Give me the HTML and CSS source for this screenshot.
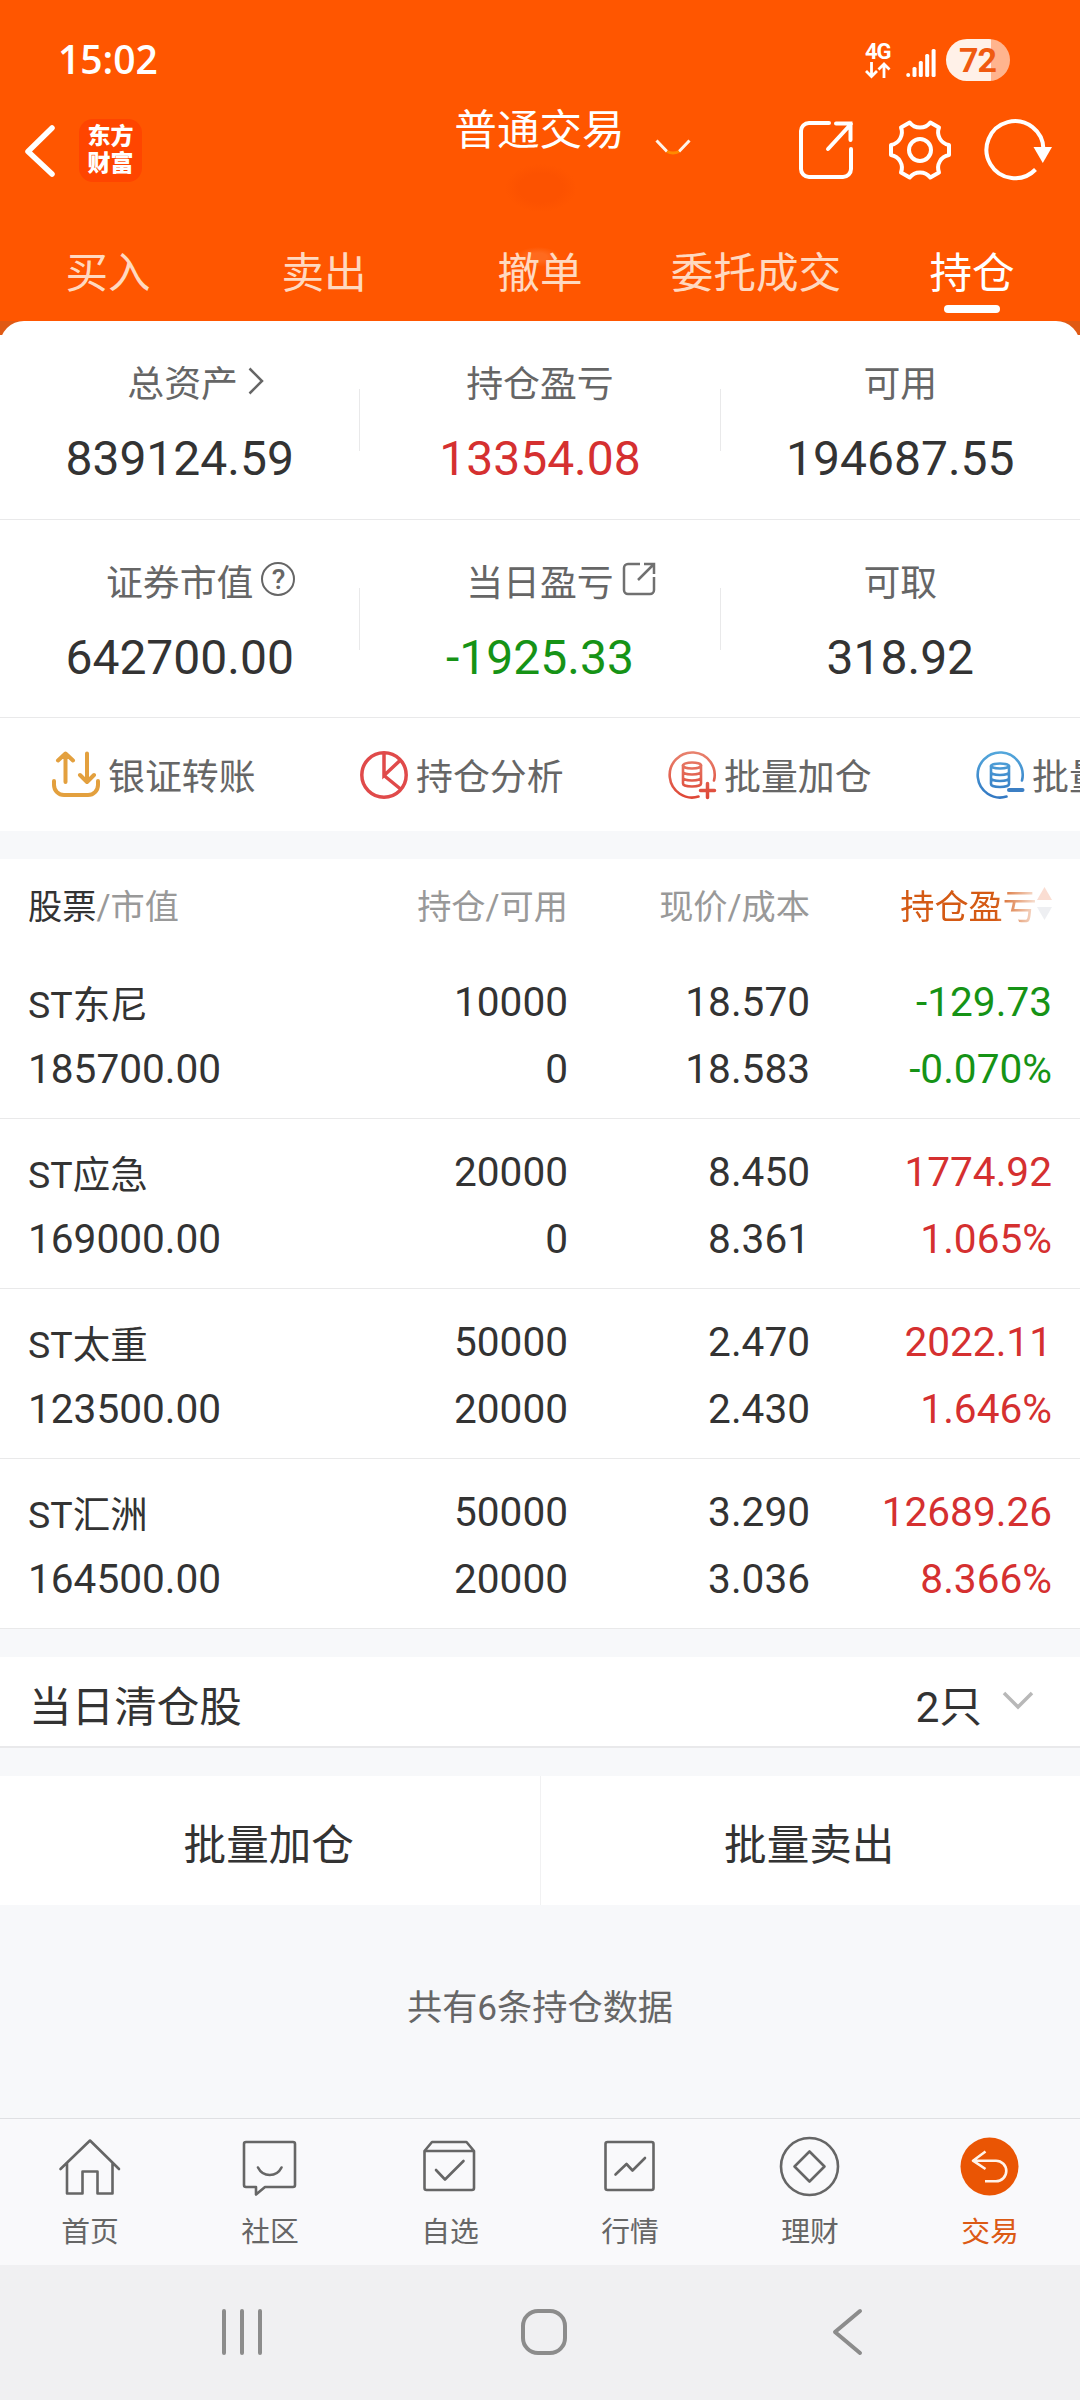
FILE: index.html
```html
<!DOCTYPE html>
<html lang="zh-CN">
<head>
  <meta charset="UTF-8">
  <meta name="viewport" content="width=device-width, initial-scale=1.0">
  <title>普通交易 - 持仓</title>
  <link rel="stylesheet" href="styles.css">
</head>
<body>

  <header class="header">
    <div class="status">
      <span class="clock">15:02</span>
      <div class="status-right">
        <div class="network">
          <span>4G</span>
          <svg width="26" height="16" viewBox="0 0 26 16" fill="none" stroke="#fff" stroke-width="2.8"><path d="M6.500 0v14M1 9l5.500 5.500L12 9M19 16V2M13.500 7.500L19 2l5.500 5.500"/></svg>
        </div>
        <svg class="signal" width="30" height="28" viewBox="0 0 30 28" fill="#fff">
          <circle cx="2.200" cy="26" r="2"/>
          <rect x="6.500" y="18" width="4" height="10" rx="1.500"/>
          <rect x="12.800" y="12" width="4" height="16" rx="1.500"/>
          <rect x="19.200" y="5" width="4" height="23" rx="1.500"/>
          <rect x="25.600" y="0" width="4" height="28" rx="1.500"/>
        </svg>
        <span class="battery">72</span>
      </div>
    </div>

    <div class="nav">
      <div class="nav-left">
        <svg width="32" height="54" viewBox="0 0 32 54" fill="none" stroke="#fff" stroke-width="5.500" stroke-linecap="round" stroke-linejoin="round"><path d="M28 4L4 27.500 28 50"/></svg>
        <div class="logo">东方<br>财富</div>
      </div>
      <div class="nav-title">
        <h1>普通交易</h1>
        <svg width="36" height="16" viewBox="0 0 36 16" fill="none" stroke="#fff3e8" stroke-width="3"><path d="M1.500 1.500L12 12.500M24 12.500L34.500 1.500"/><path d="M12 12.500q6 3 12 0" stroke="#ff8a00"/></svg>
      </div>
      <div class="nav-right">
        <svg width="64" height="64" viewBox="0 0 64 64" fill="none" stroke="#fff" stroke-width="4"><path d="M35 5H15a8 8 0 0 0-8 8v38a8 8 0 0 0 8 8h34a8 8 0 0 0 8-8V31" stroke-linecap="round"/><path d="M34 31L57 6M42 5.500h14.500V22" stroke-linecap="round"/></svg>
        <svg width="64" height="64" viewBox="0 0 64 64" fill="none" stroke="#fff" stroke-width="4" stroke-linejoin="round"><path d="M61 27v10a13 13 0 0 0-10 17.500L42.300 59.500a13 13 0 0 0-20.600 0L13 54.500A13 13 0 0 0 3 37V27A13 13 0 0 0 13 9.500L21.700 4.500a13 13 0 0 0 20.600 0L51 9.500A13 13 0 0 0 61 27z"/><circle cx="32" cy="32" r="11"/></svg>
        <svg class="refresh" width="64" height="64" viewBox="0 0 64 64" fill="none" stroke="#fff" stroke-width="4"><path d="M61.500 32A28.500 28.500 0 1 0 53.500 51.500"/><path d="M51.500 29h18.500l-9.200 16z" fill="#fff" stroke="none"/></svg>
      </div>
    </div>

    <nav class="tabs">
      <a>买入</a>
      <a>卖出</a>
      <a class="smudge">撤单</a>
      <a>委托成交</a>
      <a class="active">持仓</a>
    </nav>
  </header>

  <main>
    <section class="assets">
      <div class="asset-row">
        <div class="asset">
          <div class="label first">总资产<svg class="chevron" width="16" height="28" viewBox="0 0 16 28" fill="none" stroke="#666" stroke-width="2.500"><path d="M1.500 1.500L14 14 1.500 26.500"/></svg></div>
          <div class="value">839124.59</div>
        </div>
        <div class="asset">
          <div class="label">持仓盈亏</div>
          <div class="value up">13354.08</div>
        </div>
        <div class="asset">
          <div class="label">可用</div>
          <div class="value">194687.55</div>
        </div>
      </div>
      <div class="asset-row">
        <div class="asset">
          <div class="label">证券市值<span class="help">?</span></div>
          <div class="value">642700.00</div>
        </div>
        <div class="asset">
          <div class="label">当日盈亏<svg class="share" width="34" height="34" viewBox="0 0 34 34" fill="none" stroke="#707070" stroke-width="2.500"><path d="M18 2H6a4 4 0 0 0-4 4v22a4 4 0 0 0 4 4h22a4 4 0 0 0 4-4V15M16 18L31 3M22 2h10v10"/></svg></div>
          <div class="value down">-1925.33</div>
        </div>
        <div class="asset">
          <div class="label">可取</div>
          <div class="value">318.92</div>
        </div>
      </div>
    </section>

    <section class="actions">
      <a>
        <svg width="48" height="48" viewBox="0 0 48 48" fill="none" stroke="#e3a03e" stroke-width="4" stroke-linecap="round" stroke-linejoin="round"><path d="M13.500 31V3M6 9.500L13.500 2.500 21 9.500M35 2.500v28M28 24l7 7 7-7M2 30v4a10 10 0 0 0 10 10h24a10 10 0 0 0 10-10v-4"/></svg>
        <span>银证转账</span>
      </a>
      <a>
        <svg width="48" height="48" viewBox="0 0 48 48" fill="none" stroke="#e04a4a" stroke-width="3.500"><circle cx="24" cy="24" r="22.200"/><path d="M24 2v22.500L40.500 9M24 24.500L40.500 38"/></svg>
        <span>持仓分析</span>
      </a>
      <a>
        <svg width="48" height="48" viewBox="0 0 48 48" fill="none" stroke="url(#red)" stroke-width="2.600" stroke-linecap="round">
          <defs><linearGradient id="red" gradientUnits="userSpaceOnUse" x1="0" y1="0" x2="0" y2="48"><stop offset="0" stop-color="#e8836f"/><stop offset="1" stop-color="#de4535"/></linearGradient></defs>
          <path d="M46 29.500A22.500 22.500 0 1 0 30.500 45.600"/>
          <ellipse cx="24" cy="14.500" rx="9" ry="3"/>
          <path d="M15 14.500v18c0 4 18 4 18 0v-18M15 20.500c0 4 18 4 18 0M15 26.500c0 4 18 4 18 0"/>
          <path d="M32.500 39.500h14M39.500 32.500v14" stroke-width="3.500"/>
        </svg>
        <span>批量加仓</span>
      </a>
      <a>
        <svg width="48" height="48" viewBox="0 0 48 48" fill="none" stroke="url(#blue)" stroke-width="2.600" stroke-linecap="round">
          <defs><linearGradient id="blue" gradientUnits="userSpaceOnUse" x1="0" y1="0" x2="0" y2="48"><stop offset="0" stop-color="#54a8dc"/><stop offset="1" stop-color="#3277c2"/></linearGradient></defs>
          <path d="M46 29.500A22.500 22.500 0 1 0 30.500 45.600"/>
          <ellipse cx="24" cy="15" rx="9" ry="2.500"/>
          <path d="M15 15v18c0 4 18 4 18 0v-18M15 21c0 4 18 4 18 0M15 27c0 4 18 4 18 0"/>
          <path d="M33 39h13.500" stroke="#3c7fc4" stroke-width="4"/>
        </svg>
        <span>批量</span>
      </a>
    </section>

    <section class="holdings">
      <div class="holdings-head">
        <span><b>股票</b>/市值</span>
        <span>持仓/可用</span>
        <span>现价/成本</span>
        <span class="sort">持仓盈亏<svg width="15" height="34" viewBox="0 0 15 34"><path d="M7.500 0L15 13H0z" fill="#e8541e"/><path d="M0 20h15l-7.500 13z" fill="#aab0c0"/></svg></span>
      </div>
      <div class="stock">
        <div><span class="name">ST东尼</span><span>185700.00</span></div>
        <div><span>10000</span><span>0</span></div>
        <div><span>18.570</span><span>18.583</span></div>
        <div class="down"><span>-129.73</span><span>-0.070%</span></div>
      </div>
      <div class="stock">
        <div><span class="name">ST应急</span><span>169000.00</span></div>
        <div><span>20000</span><span>0</span></div>
        <div><span>8.450</span><span>8.361</span></div>
        <div class="up"><span>1774.92</span><span>1.065%</span></div>
      </div>
      <div class="stock">
        <div><span class="name">ST太重</span><span>123500.00</span></div>
        <div><span>50000</span><span>20000</span></div>
        <div><span>2.470</span><span>2.430</span></div>
        <div class="up"><span>2022.11</span><span>1.646%</span></div>
      </div>
      <div class="stock">
        <div><span class="name">ST汇洲</span><span>164500.00</span></div>
        <div><span>50000</span><span>20000</span></div>
        <div><span>3.290</span><span>3.036</span></div>
        <div class="up"><span>12689.26</span><span>8.366%</span></div>
      </div>
    </section>

    <section class="cleared">
      <span>当日清仓股</span>
      <span class="count">2只<svg width="32" height="20" viewBox="0 0 32 20" fill="none" stroke="#b8b8b8" stroke-width="3.500"><path d="M2 2l14 14L30 2"/></svg></span>
    </section>

    <section class="batch">
      <button>批量加仓</button>
      <button>批量卖出</button>
    </section>

    <p class="total">共有6条持仓数据</p>
  </main>

  <footer class="tabbar">
    <a>
      <svg width="64" height="64" viewBox="0 0 64 64"><path d="M2.500 35L32 6.500 61 35M9 29v30.500h15.500V37.500h15v22h15V29"/></svg>
      首页
    </a>
    <a>
      <svg width="64" height="64" viewBox="0 0 64 64"><path d="M8 8h47a2 2 0 0 1 2 2v41a2 2 0 0 1-2 2H27l-9 7.500V53H8a2 2 0 0 1-2-2V10a2 2 0 0 1 2-2zM20 33.500c5 10 18.500 10 23.500 0"/></svg>
      社区
    </a>
    <a>
      <svg width="64" height="64" viewBox="0 0 64 64"><path d="M6.500 17L14 8h34.500l7.500 9v37a2 2 0 0 1-2 2H8.500a2 2 0 0 1-2-2zh49.500M18 36l9 9.500L45.500 27"/></svg>
      自选
    </a>
    <a>
      <svg width="64" height="64" viewBox="0 0 64 64"><rect x="7.500" y="8" width="48" height="48" rx="2"/><path d="M17.500 40.500L28.500 30l6 6.500L47 24"/></svg>
      行情
    </a>
    <a>
      <svg width="64" height="64" viewBox="0 0 64 64"><circle cx="31.500" cy="32.500" r="28.500"/><path d="M31.500 17.500L46.500 32.500 31.500 47.500 16.500 32.500z"/></svg>
      理财
    </a>
    <a class="current">
      <svg width="64" height="64" viewBox="0 0 64 64"><circle cx="31.500" cy="32.500" r="29" fill="#ea5504" stroke="none"/><path d="M15.500 26.700h22.500a10.300 10.300 0 0 1 0 20.600H27M27.500 17.500L15 26.700 27.500 35" stroke="#fff3ea" stroke-linecap="butt"/></svg>
      交易
    </a>
  </footer>

  <div class="system-nav">
    <svg width="42" height="44" viewBox="0 0 42 44"><path d="M3 1v42M21 1v42M39 1v42"/></svg>
    <svg class="home" width="48" height="48" viewBox="0 0 48 48"><rect x="3" y="3" width="42" height="42" rx="15"/></svg>
    <svg width="32" height="48" viewBox="0 0 32 48"><path d="M29 3L4 24l25 21"/></svg>
  </div>

</body>
</html>
```
FILE: styles.css
```css
* {
  box-sizing: border-box;
}

body {
  margin: 0;
  width: 1080px;
  height: 2400px;
  overflow: hidden;
  display: flex;
  flex-direction: column;
  background-color: #f7f8fa;
  color: #333;
  font-family: Roboto, "Noto Sans CJK SC", sans-serif;
}

svg {
  display: block;
  flex: none;
  overflow: visible;
}

.up {
  color: #d53030;
}

.down {
  color: #169316;
}

/* header */
.header {
  height: 321px;
  flex: none;
  background-color: #ff5600;
  color: #fff;
}

.status {
  height: 119px;
  padding: 0 70px 0 58px;
  display: flex;
  justify-content: space-between;
  align-items: center;
}

.clock {
  margin-top: -2px;
  font: 600 39px/44px "Open Sans", sans-serif;
}

.status-right {
  display: flex;
  align-items: center;
}

.network {
  width: 26px;
  margin-right: 15px;
  font-size: 22px;
  line-height: 20px;
  font-weight: 700;
  letter-spacing: -1px;
}

.signal {
  margin: 6px 10px 0 0;
}

.battery {
  width: 64px;
  height: 42px;
  padding-right: 1px;
  border-radius: 21px;
  background: linear-gradient(to right, #fff1e8 45px, #ffb48e 45px);
  color: #f05a10;
  font-size: 34px;
  font-weight: 700;
  line-height: 43px;
  text-align: center;
  letter-spacing: -1px;
}

.nav {
  height: 110px;
  padding: 0 34px 0 24px;
  display: grid;
  grid-template-columns: 300px 1fr 300px;
}

.nav-left {
  height: 63px;
  display: flex;
  align-items: center;
  gap: 23px;
}

.logo {
  width: 63px;
  height: 63px;
  padding-top: 4px;
  border-radius: 14px;
  background-color: #ff4500;
  font-size: 23px;
  line-height: 27px;
  font-weight: 900;
  text-align: center;
}

.nav-title {
  display: flex;
  justify-content: center;
  background: radial-gradient(ellipse 36px 24px at 217px 69px, #fc5200 60%, transparent);
}

.nav-title h1 {
  margin: -12px 0 0 7px;
  font-size: 42.600px;
  line-height: 46px;
  font-weight: 400;
}

.nav-title svg {
  margin: 20px -68px 0 30px;
}

.nav-right {
  display: flex;
  justify-content: flex-end;
  gap: 30px;
  margin-top: -1px;
}

.tabs {
  display: flex;
}

.tabs a {
  flex: 1;
  height: 84px;
  display: flex;
  flex-direction: column;
  align-items: center;
  gap: 8px;
  padding-top: 20px;
  color: #ffd9c0;
  font-size: 42.600px;
  line-height: 48px;
}

.tabs .smudge {
  background: radial-gradient(ellipse 22px 10px at 106px 28px, #ff6a1e 40%, transparent);
}

.tabs .active {
  color: #fff;
}

.tabs .active::after {
  content: "";
  width: 56px;
  height: 8px;
  border-radius: 4px;
  background-color: #fff;
}

/* assets */
.assets {
  background: linear-gradient(#e05a14 14px, #fff 14px);
}

.asset-row {
  height: 199px;
  display: flex;
  align-items: center;
  background-color: #fff;
  border-bottom: 1px solid #e9e9ea;
}

.asset-row:first-child {
  border-radius: 24px 24px 0 0;
}

.asset-row + .asset-row {
  height: 198px;
}

.asset {
  flex: 1;
  height: 62px;
  display: flex;
  flex-direction: column;
  align-items: center;
  justify-content: center;
  gap: 26px;
  padding-top: 8px;
  border-right: 1px solid #e9e9ea;
}

.asset:last-child {
  border-right: none;
}

.label {
  display: flex;
  align-items: center;
  height: 44px;
  flex: none;
  color: #666;
  font-size: 36.900px;
  line-height: 44px;
}

.label.first {
  padding-left: 6px;
}

.chevron {
  margin: -8px -26px 0 10px;
}

.share {
  margin: -9px -42px 0 8px;
}

.help {
  width: 34px;
  height: 34px;
  margin: -9px -42px 0 8px;
  border: 2.500px solid #666;
  border-radius: 50%;
  font-size: 28px;
  font-weight: 500;
  line-height: 31px;
  text-align: center;
}

.value {
  height: 52px;
  flex: none;
  font-size: 48px;
  line-height: 52px;
}

/* quick actions */
.actions {
  height: 113px;
  padding: 0 0 0 52px;
  display: flex;
  overflow: hidden;
  background-color: #fff;
}

.actions a {
  flex: 0 0 308px;
  display: flex;
  align-items: center;
  gap: 8px;
  color: #666;
  font-size: 36.900px;
  line-height: 48px;
  white-space: nowrap;
}

.actions span {
  padding-top: 6px;
}

/* holdings */
.holdings {
  margin-top: 28px;
  background-color: #fff;
}

.holdings-head,
.stock {
  display: grid;
  grid-template-columns: 297px 243px 242px 242px;
  padding-left: 28px;
}

.holdings-head {
  height: 90px;
  align-items: center;
  color: #999;
  font-size: 34.200px;
  text-align: right;
}

.holdings-head span:first-child {
  text-align: left;
}

.holdings-head b {
  color: #333;
  font-weight: 400;
}

.holdings-head .sort {
  display: flex;
  justify-content: flex-end;
  align-items: center;
  color: #d45a14;
  -webkit-mask-image: linear-gradient(to right, #000 185px, rgba(0, 0, 0, 0.2) 225px);
  mask-image: linear-gradient(to right, #000 185px, rgba(0, 0, 0, 0.2) 225px);
}

.stock {
  height: 170px;
  padding-top: 19px;
  border-bottom: 1px solid #e9e9ea;
  font-size: 40.600px;
  line-height: 68px;
  text-align: right;
}

.stock span {
  display: block;
  height: 67px;
}

.stock div:first-child {
  text-align: left;
}

.stock .name {
  padding-top: 3px;
  font-size: 37.500px;
}

.cleared {
  height: 91px;
  margin-top: 28px;
  padding: 3px 46px 0 29px;
  display: flex;
  justify-content: space-between;
  align-items: center;
  background-color: #fff;
  border-bottom: 2px solid #e9e9eb;
  font-size: 42.600px;
}

.count {
  display: flex;
  align-items: center;
  gap: 20px;
}

.count svg {
  margin-top: -4px;
}

.batch {
  height: 129px;
  margin-top: 28px;
  display: flex;
  background-color: #fff;
}

.batch button {
  flex: 1;
  padding: 2px 2px 0 0;
  border: none;
  background: none;
  color: #333;
  font-family: inherit;
  font-size: 42.600px;
}

.batch button:first-child {
  border-right: 1px solid #f1f1f2;
}

.total {
  margin: 81px 0 0;
  color: #666;
  font-size: 35.200px;
  line-height: 44px;
  text-align: center;
}

/* bottom tabs */
.tabbar {
  height: 147px;
  margin-top: auto;
  flex: none;
  display: flex;
  background-color: #f9f9fb;
  border-top: 1px solid #dfe0e3;
}

.tabbar a {
  flex: 1;
  display: flex;
  flex-direction: column;
  align-items: center;
  padding-top: 15px;
  gap: 14px;
  color: #666;
  font-size: 28.800px;
  line-height: 40px;
}

.tabbar svg {
  fill: none;
  stroke: #666;
  stroke-width: 2.600;
  stroke-linecap: round;
  stroke-linejoin: round;
}

.tabbar .current {
  color: #dc5a14;
}

.system-nav {
  height: 135px;
  flex: none;
  display: flex;
  justify-content: space-between;
  align-items: center;
  padding: 0 217px 1px 221px;
  background-color: #f0f0f2;
}

.system-nav svg {
  fill: none;
  stroke: #8c8c8c;
  stroke-width: 4;
  stroke-linecap: round;
  stroke-linejoin: round;
}

.system-nav .home {
  margin-right: 6px;
}
```
